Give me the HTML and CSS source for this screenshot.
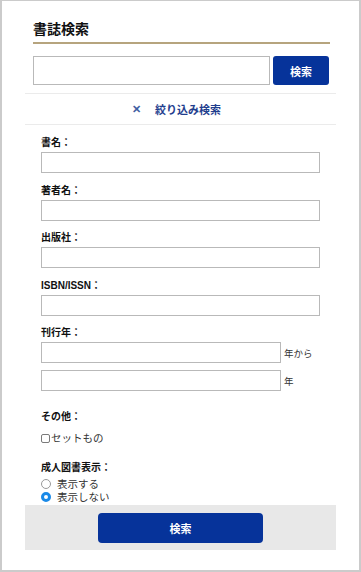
FILE: index.html
```html
<!DOCTYPE html>
<html lang="ja">

<head>
    <meta charset="UTF-8">
    <meta name="viewport" content="width=device-width, initial-scale=1.0">
    <title>書誌検索</title>
    <link rel="stylesheet" href="styles.css">
</head>

<body>

    <div class="frame">
        <div class="search_head">
            <h1 class="search_title">書誌検索</h1>
            <form class="quick_search">
                <input type="text" class="quick_input">
                <button type="button" class="quick_button">検索</button>
            </form>
        </div>

        <div class="detail">
            <div class="detail_toggle">
                <span class="toggle_mark">&#x2715;</span>
                <span class="toggle_text">絞り込み検索</span>
            </div>

            <form class="detail_form">
                <div class="field">
                    <label class="field_label">書名：</label>
                    <input type="text" class="field_input">
                </div>
                <div class="field">
                    <label class="field_label">著者名：</label>
                    <input type="text" class="field_input">
                </div>
                <div class="field">
                    <label class="field_label">出版社：</label>
                    <input type="text" class="field_input">
                </div>
                <div class="field">
                    <label class="field_label">ISBN/ISSN：</label>
                    <input type="text" class="field_input">
                </div>
                <div class="field">
                    <label class="field_label">刊行年：</label>
                    <div class="year_row">
                        <input type="text" class="field_input year_input">
                        <span class="year_unit">年から</span>
                    </div>
                    <div class="year_row">
                        <input type="text" class="field_input year_input">
                        <span class="year_unit">年</span>
                    </div>
                </div>

                <div class="field field_other">
                    <label class="field_label">その他：</label>
                    <label class="check_line">
                        <input type="checkbox" class="check_box">セットもの
                    </label>
                </div>

                <div class="field field_adult">
                    <label class="field_label">成人図書表示：</label>
                    <label class="radio_line">
                        <input type="radio" name="adult" class="radio_box">表示する
                    </label>
                    <label class="radio_line">
                        <input type="radio" name="adult" class="radio_box" checked>表示しない
                    </label>
                </div>
            </form>

            <div class="detail_footer">
                <button type="button" class="submit_button">検索</button>
            </div>
        </div>
    </div>

</body>

</html>
```

FILE: styles.css
```css
* {
    box-sizing: border-box;
}

body {
    margin: 0;
    background: #fff;
    font-family: "Liberation Sans", "Noto Sans CJK JP", sans-serif;
    color: #1a1a1a;
}

.frame {
    width: 361px;
    height: 572px;
    border: 2px solid #cbcbcb;
    border-top-width: 1px;
    background: #fff;
}

.search_head {
    padding: 18px 29px 0 31px;
}

.search_title {
    margin: 0;
    padding-bottom: 3px;
    border-bottom: 2px solid #b6a47e;
    font-size: 14px;
    line-height: 20px;
    font-weight: bold;
    color: #111;
}

.quick_search {
    display: flex;
    gap: 3px;
    margin-top: 12px;
}

.quick_input {
    width: 237px;
    height: 29px;
    margin: 0;
    border: 1px solid #b9b9b9;
    border-radius: 0;
}

.quick_button {
    width: 56px;
    height: 29px;
    border: none;
    border-radius: 3px;
    background: #06339a;
    color: #fff;
    font-family: inherit;
    font-size: 11px;
    font-weight: bold;
}

.detail {
    margin: 8px 23px 0 23px;
}

.detail_toggle {
    display: flex;
    justify-content: center;
    align-items: center;
    gap: 14px;
    height: 32px;
    border-top: 1px solid #ebebeb;
    border-bottom: 1px solid #ebebeb;
    padding-right: 8px;
    color: #1f3e8e;
    font-size: 11px;
    font-weight: bold;
}

.toggle_mark {
    font-size: 11px;
    color: #3f5fa3;
}

.detail_form {
    padding: 11px 16px 0 16px;
}

.field {
    margin-bottom: 10.5px;
}

.field_label {
    display: block;
    height: 14px;
    margin-bottom: 2px;
    font-size: 10px;
    line-height: 14px;
    font-weight: bold;
    color: #111;
}

.field_input {
    display: block;
    width: 100%;
    height: 21px;
    margin: 0;
    border: 1px solid #b9b9b9;
    border-radius: 0;
}

.year_row {
    display: flex;
    align-items: center;
    gap: 3px;
    margin-bottom: 7px;
}

.year_input {
    width: 240px;
}

.year_unit {
    font-size: 9.5px;
    color: #333;
}

.field_other {
    margin-top: 19px;
}

.check_line {
    display: flex;
    align-items: center;
    margin-top: 7px;
    font-size: 10.5px;
    line-height: 14px;
    color: #333;
}

.check_box {
    appearance: none;
    width: 9px;
    height: 9px;
    margin: 1px 1px 0 0;
    border: 1px solid #7a7a7a;
    border-radius: 2px;
    background: #fff;
}

.field_adult {
    margin-top: 16px;
    margin-bottom: 2px;
}

.field_adult .field_label {
    margin-bottom: 2px;
}

.radio_line {
    display: flex;
    align-items: center;
    gap: 6px;
    height: 13px;
    font-size: 10.5px;
    color: #333;
}

.radio_box {
    appearance: none;
    width: 10px;
    height: 10px;
    margin: 0;
    border: 1px solid #9a9a9a;
    border-radius: 50%;
    background: #fff;
}

.radio_box:checked {
    border: 3px solid #1a8ae8;
    background: #fff;
}

.detail_footer {
    display: flex;
    justify-content: center;
    height: 45px;
    padding-top: 8px;
    background: #e8e8e8;
}

.submit_button {
    width: 165px;
    height: 30px;
    border: none;
    border-radius: 4px;
    background: #06339a;
    color: #fff;
    font-family: inherit;
    font-size: 11px;
    font-weight: bold;
}
```
